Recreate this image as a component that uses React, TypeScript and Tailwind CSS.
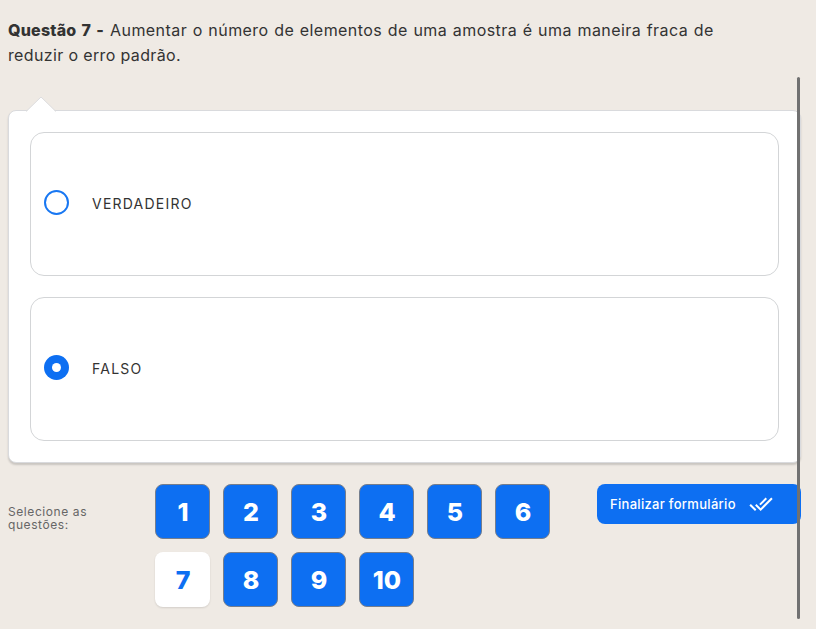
import { MdDoneAll } from "react-icons/md";

const CURRENT = 7;
const questions = Array.from({ length: 10 }, (_, i) => i + 1);

function Option({ label, checked }: { label: string; checked: boolean }) {
  return (
    <label className="flex h-[144px] w-[749px] items-center rounded-[14px] border border-[#d3d5d7] pl-[13px]">
      <span
        className={
          checked
            ? "mb-[3px] flex size-[25px] items-center justify-center rounded-full bg-[#0d6ff2]"
            : "mb-[3px] size-[25px] rounded-full border-2 border-[#1877f2] bg-white"
        }
      >
        {checked && <span className="size-[9px] rounded-full bg-white" />}
      </span>
      <span
        className={
          checked
            ? "mb-0.5 ml-[23px] text-[14px] tracking-[1.25px]"
            : "mb-0.5 ml-[23px] text-[14px] tracking-[1.22px]"
        }
      >
        {label}
      </span>
    </label>
  );
}

export default function App() {
  return (
    <main className="relative h-[629px] w-[816px] overflow-hidden bg-[#efeae4] pl-2 font-['Inter',sans-serif] text-[#333]">
      <h1 className="h-[110px] pt-[18px] text-[16px] leading-[25px] font-normal whitespace-nowrap">
        <span className="block">
          <b className="inline-block w-[102px] font-extrabold tracking-[0.2px] [word-spacing:1.5px]">Questão 7 -</b>
          <span className="tracking-[0.44px] [word-spacing:0.65px]">
            Aumentar o número de elementos de uma amostra é uma maneira fraca de
          </span>
        </span>
        <span className="block tracking-[0.36px]">reduzir o erro padrão.</span>
      </h1>

      <section className="relative flex h-[353px] w-[793px] flex-col gap-[21px] rounded-lg border border-[#d9dadd] bg-white pt-[21px] pl-[21px] shadow-[0_2px_2px_rgba(0,0,0,0.16)]">
        <svg className="absolute -top-[15px] left-[17px]" width="30" height="17" viewBox="0 0 30 17">
          <path d="M0 16 L15 1 L30 16 V17 H0Z" fill="white" />
          <path d="M0 15.5 L15 1 L30 15.5" fill="none" stroke="#dddddf" strokeWidth="1" />
        </svg>
        <Option label="VERDADEIRO" checked={false} />
        <Option label="FALSO" checked />
      </section>

      <footer className="flex items-start pt-[21px]">
        <p className="mt-[21px] w-[147px] text-[12px] leading-[13px] tracking-[0.58px] text-[#666]">
          <span className="block">Selecione as</span>
          <span className="block">questões:</span>
        </p>
        <nav className="grid grid-cols-6 gap-[13px]">
          {questions.map((n) => (
            <button
              key={n}
              className={
                n === CURRENT
                  ? "size-[55px] rounded-lg bg-white pt-0.5 pl-px text-[25px] font-extrabold text-[#0d6ff2] shadow-[0_1px_2px_rgba(0,0,0,0.12)]"
                  : "size-[55px] rounded-lg border border-[#757e8d] bg-[#0d6ff2] pt-0.5 pl-px text-[25px] font-extrabold text-white"
              }
            >
              {n}
            </button>
          ))}
        </nav>
        <button className="ml-[47px] flex h-10 w-[204px] shrink-0 items-center rounded-lg bg-[#0d6ff2] pl-[13px] text-white">
          <span className="w-[139px] pt-0.5 text-left text-[13px] font-medium tracking-[0.3px] whitespace-nowrap">
            Finalizar formulário
          </span>
          <MdDoneAll size={24} />
        </button>
      </footer>

      <div className="absolute top-[77px] left-[797px] h-[542px] w-[3px] rounded-full bg-[#717171]" />
    </main>
  );
}
